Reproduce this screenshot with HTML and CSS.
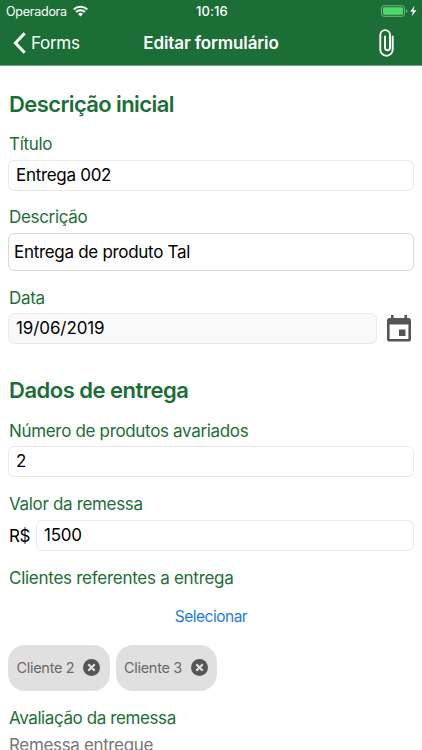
FILE: index.html
```
<!DOCTYPE html>
<html lang="pt-BR">
<head>
<meta charset="utf-8">
<title>Editar formulário</title>
<link rel="stylesheet" href="styles.css">
</head>
<body>
<header class="header">
  <div class="status">
    <div class="carrier"><span>Operadora</span>
      <svg class="wifi" width="14" height="11" viewBox="0 0 14 11"><g fill="none" stroke="#fff" stroke-width="1.9"><path d="M.7 4.1a9 9 0 0 1 12.6 0"/><path d="M2.9 6.5a5.8 5.8 0 0 1 8.2 0"/></g><path fill="#fff" d="M4.7 8.2a3.3 3.3 0 0 1 4.6 0L7 10.6z"/></svg>
    </div>
    <span class="clock">10:16</span>
    <div class="power">
      <svg width="37" height="13" viewBox="0 0 37 13"><rect x=".5" y=".8" width="23" height="10.5" rx="2.4" fill="none" stroke="#82ad8d"/><rect x="2" y="2.3" width="20" height="7.5" rx="1.2" fill="#4cd964"/><path d="M25 4.3q1.4.4 1.4 1.8T25 7.9z" fill="#82ad8d"/><path d="M33.5.8 29.3 6.8h2.6L30.7 11.3 35.5 5.3h-3z" fill="#fff"/></svg>
    </div>
  </div>
  <nav class="nav">
    <div class="back">
      <svg width="13" height="22" viewBox="0 0 13 22"><path d="M11.7 1.3 2.4 11l9.3 9.7" fill="none" stroke="#fff" stroke-width="3"/></svg>
      <span>Forms</span>
    </div>
    <h1 class="title">Editar formulário</h1>
    <svg class="clip" width="15" height="28" viewBox="0 0 15 28"><path d="M13.7 7.5v13a6.2 6.2 0 0 1-12.4 0V6a4.85 4.85 0 0 1 9.7 0v12.7a2.5 2.5 0 0 1-5 0V7.5" fill="none" stroke="#fff" stroke-width="1.9" stroke-linecap="round"/></svg>
  </nav>
</header>
<main class="form">
  <h2 class="section">Descrição inicial</h2>
  <div class="label">Título</div>
  <div class="input first"><span>Entrega 002</span></div>
  <div class="label spaced">Descrição</div>
  <div class="input area"><span>Entrega de produto Tal</span></div>
  <div class="label spaced">Data</div>
  <div class="row date">
    <div class="input disabled"><span>19/06/2019</span></div>
    <svg class="calendar" width="24" height="27" viewBox="0 0 24 27"><path fill="#555" fill-rule="evenodd" d="M4 0h2.6v3h10.8V0H20v3h1.4Q24 3 24 5.6V24q0 2.6-2.6 2.6H2.6Q0 26.6 0 24V5.6Q0 3 2.6 3H4zM2.6 9.5V24h18.8V9.5zM12 14.5h6.5V21H12z"/></svg>
  </div>
  <h2 class="section second">Dados de entrega</h2>
  <div class="label">Número de produtos avariados</div>
  <div class="input"><span>2</span></div>
  <div class="label spaced">Valor da remessa</div>
  <div class="row money"><span class="currency">R$</span><div class="input"><span>1500</span></div></div>
  <div class="label spaced clients">Clientes referentes a entrega</div>
  <div class="select"><span>Selecionar</span></div>
  <div class="chips">
    <div class="chip"><span>Cliente 2</span><svg width="17" height="17" viewBox="0 0 17 17"><circle cx="8.5" cy="8.5" r="8.5" fill="#555"/><path d="m5.3 5.3 6.4 6.4m0-6.4-6.4 6.4" stroke="#e0e0e0" stroke-width="2.2"/></svg></div>
    <div class="chip"><span>Cliente 3</span><svg width="17" height="17" viewBox="0 0 17 17"><circle cx="8.5" cy="8.5" r="8.5" fill="#555"/><path d="m5.3 5.3 6.4 6.4m0-6.4-6.4 6.4" stroke="#e0e0e0" stroke-width="2.2"/></svg></div>
  </div>
  <div class="label last">Avaliação da remessa</div>
  <div class="picker"><span>Remessa entregue</span></div>
</main>
</body>
</html>
```
FILE: styles.css
```
* { box-sizing: border-box; }
html, body { height: 750px; overflow: hidden; }
body { margin: 0; background: #fff; color: #000; font-family: Inter, "Liberation Sans", sans-serif; font-size: 17px; }
svg { display: block; flex: none; }
span { white-space: nowrap; }
h1, h2 { margin: 0; }

.header { height: 66px; background: #1b6e36; color: #fff; border-bottom: 1px solid #76a684; }
.status { height: 22px; display: grid; grid-template-columns: 1fr auto 1fr; align-items: center; padding: 0 4px 0 6px; }
.carrier { display: flex; align-items: center; gap: 5px; font-size: 12.5px; letter-spacing: -.25px; }
.carrier span { width: 62px; }
.wifi { width: 15px; height: 12px; }
.clock { font-size: 13px; font-weight: 500; letter-spacing: .1px; }
.power { justify-self: end; }
.nav { height: 42px; display: grid; grid-template-columns: 1fr auto 1fr; align-items: center; padding: 0 28px 0 13px; }
.back { display: flex; align-items: center; gap: 5px; letter-spacing: -.3px; }
.title { font-size: 17px; font-weight: 600; letter-spacing: -.12px; white-space: nowrap; margin-left: 15px; }
.clip { justify-self: end; }

.form { padding: 24px 8px 0; }
.section { height: 28px; line-height: 28px; padding-left: 1px; margin-bottom: 16px; color: #1b6e36; font-size: 22px; font-weight: 600; letter-spacing: -.6px; }
.section.second { margin-top: 32px; margin-bottom: 17px; letter-spacing: -.5px; }
.label { height: 20px; line-height: 20px; margin-bottom: 6px; padding-left: 1px; color: #1b6e36; letter-spacing: -.33px; }
.label.spaced { margin-top: 17px; }
.input { height: 31px; border: 1px solid #eaeaea; border-radius: 6px; display: flex; align-items: center; padding: 0 7px 1px; letter-spacing: -.3px; }
.first + .label.spaced { margin-top: 16px; }
.area { height: 38px; border-color: #d9d9d9; padding: 0 5px; }
.area + .label.spaced { margin-bottom: 5px; }
.disabled { background: #f9f9f9; letter-spacing: -.1px; }
.row { display: flex; align-items: center; }
.row .input { flex: 1; }
.date { gap: 10px; padding-right: 3px; }
.money { gap: 6px; }
.currency { padding-left: 1px; letter-spacing: -.4px; }
.second + .label { margin-bottom: 5px; }
.label.clients { letter-spacing: -.27px; }
.select { margin-top: 19px; height: 20px; line-height: 20px; text-align: center; color: #1b7ce5; font-size: 15.5px; letter-spacing: -.5px; }
.chips { display: flex; gap: 6px; margin-top: 18px; }
.chip { width: 101.5px; height: 46px; border-radius: 17px; background: #e0e0e0; color: #686868; font-size: 14.5px; letter-spacing: -.3px; display: flex; align-items: center; justify-content: space-between; padding: 0 9.5px 1px 8.5px; }
.label.last { margin-top: 17px; letter-spacing: -.4px; }
.picker { padding-left: 1px; height: 22px; line-height: 22px; color: #777; letter-spacing: -.35px; }
```
